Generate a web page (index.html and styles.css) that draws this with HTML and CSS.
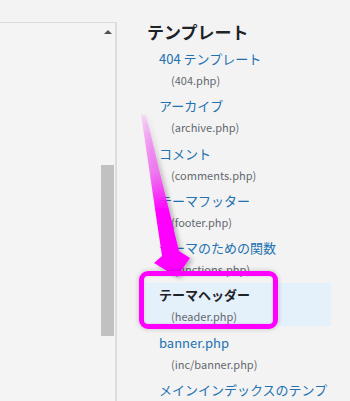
FILE: index.html
```html
<!DOCTYPE html>
<html lang="ja">
<head>
    <meta charset="UTF-8">
    <meta name="viewport" content="width=device-width, initial-scale=1.0">
    <link rel="stylesheet" href="styles.css">
    <title>テーマファイル</title>
</head>
<body>
    <div class="editor">
        <div class="editor-box">
            <div class="scrollbar">
                <span class="scroll-up"></span>
                <span class="scroll-thumb"></span>
            </div>
        </div>
    </div>
    <aside class="files">
        <h2>テンプレート</h2>
        <ul>
            <li><a href="#">404 テンプレート</a><span>(404.php)</span></li>
            <li><a href="#">アーカイブ</a><span>(archive.php)</span></li>
            <li><a href="#">コメント</a><span>(comments.php)</span></li>
            <li><a href="#">テーマフッター</a><span>(footer.php)</span></li>
            <li><a href="#">テーマのための関数</a><span>(functions.php)</span></li>
            <li class="current"><a href="#">テーマヘッダー</a><span>(header.php)</span></li>
            <li><a href="#">banner.php</a><span>(inc/banner.php)</span></li>
            <li><a href="#">メインインデックスのテンプレート</a><span>(index.php)</span></li>
        </ul>
    </aside>

    <!-- annotation overlay -->
    <svg class="arrow" width="350" height="401" viewBox="0 0 350 401">
        <defs>
            <linearGradient id="arrowFill" x1="0" y1="114" x2="0" y2="275" gradientUnits="userSpaceOnUse">
                <stop offset="0" stop-color="#ff00ff" stop-opacity="0.08"/>
                <stop offset="0.35" stop-color="#f060f0" stop-opacity="0.75"/>
                <stop offset="0.6" stop-color="#ff00ff"/>
                <stop offset="1" stop-color="#ff00ff"/>
            </linearGradient>
            <filter id="arrowShadow" x="-50%" y="-10%" width="200%" height="130%">
                <feDropShadow dx="3" dy="2" stdDeviation="2" flood-color="#000" flood-opacity="0.25"/>
            </filter>
        </defs>
        <polygon points="141,114 146,115 179,251 190,258 177,277 154,263 162,256" fill="url(#arrowFill)" filter="url(#arrowShadow)"/>
    </svg>
    <div class="highlight-box"></div>
</body>
</html>
```

FILE: styles.css
```css
*, ::after, ::before{
    margin: 0;
    padding: 0;
    box-sizing: border-box;
}
body{
    display: flex;
    width: 350px;
    height: 401px;
    overflow: hidden;
    background-color: #f3f3f3;
    font-family: 'Noto Sans CJK JP', sans-serif;
    position: relative;
}
.editor{
    width: 117px;
    flex-shrink: 0;
    padding-top: 22px;
}
.editor-box{
    height: 100%;
    background-color: #f4f4f4;
    border-top: 1px solid #dcdcdc;
    border-right: 2px solid #dcdcdc;
    display: flex;
    justify-content: flex-end;
    padding-right: 1px;
}
.scrollbar{
    width: 13px;
    display: flex;
    flex-direction: column;
    align-items: center;
    padding-top: 7px;
    .scroll-up{
        width: 0;
        height: 0;
        border-left: 4px solid transparent;
        border-right: 4px solid transparent;
        border-bottom: 4px solid #505050;
    }
    .scroll-thumb{
        width: 13px;
        height: 171px;
        margin-top: 131px;
        background-color: #c1c1c1;
    }
}
.files{
    padding: 20px 0 0 28px;
    h2{
        font-size: 17px;
        line-height: 24px;
        font-weight: 700;
        color: #1d2327;
        padding-left: 2px;
        margin-bottom: 3px;
    }
    ul{
        list-style: none;
        width: 186px;
    }
    li{
        display: flex;
        flex-direction: column;
        min-height: 43px;
        padding: 2px 0 0 14px;
        margin-bottom: 4.25px;
    }
    a{
        font-size: 13px;
        line-height: 20px;
        color: #2271b1;
        text-decoration: none;
    }
    span{
        font-size: 11px;
        line-height: 20px;
        margin-top: 1px;
        padding-left: 12px;
        color: #646970;
    }
    .current{
        background-color: #e4f0fa;
        a{
            color: #1d2327;
            font-weight: 700;
        }
    }
}
.arrow{
    position: absolute;
    left: 0;
    top: 0;
    pointer-events: none;
}
.highlight-box{
    position: absolute;
    left: 139px;
    top: 271px;
    width: 139px;
    height: 58px;
    border: 5px solid #ff00ff;
    border-radius: 9px;
    box-shadow: 0 0 4px 1px rgba(0, 0, 0, 0.15), inset 0 0 3px rgba(0, 0, 0, 0.15);
}
```
